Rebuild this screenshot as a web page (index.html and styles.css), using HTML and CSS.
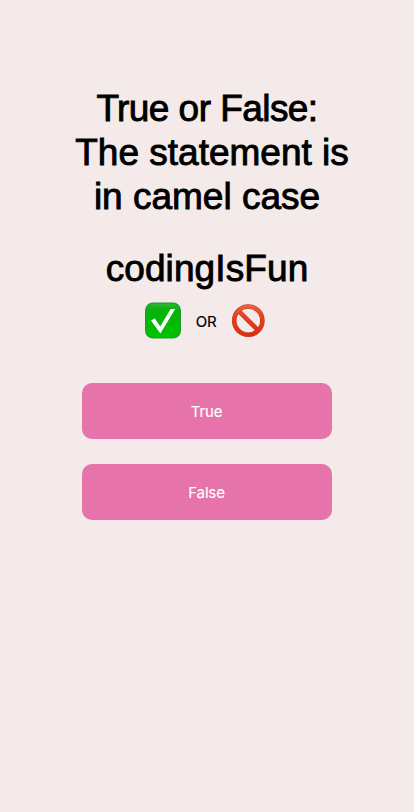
FILE: index.html
```html
<!DOCTYPE html>
<html lang="en">
<head>
<meta charset="utf-8">
<meta name="viewport" content="width=device-width, initial-scale=1">
<title>Camel case quiz</title>
<link rel="stylesheet" href="styles.css">
</head>
<body>
<main class="quiz">
  <h1 class="question"><span class="line l1">True or False:</span><span class="line l2">The statement is</span><span class="line l3">in camel case</span></h1>
  <p class="statement"><span class="line l4">codingIsFun</span></p>
  <div class="choices">
    <svg class="check" viewBox="0 0 36 36" role="img" aria-label="Yes">
      <defs><linearGradient id="green" x1="0" y1="0" x2="0" y2="1"><stop offset="0" stop-color="#32b636"/><stop offset=".2" stop-color="#05b30a"/><stop offset="1" stop-color="#00c400"/></linearGradient></defs>
      <rect x=".6" y=".1" width="34.8" height="34.8" rx="7.5" fill="url(#green)" stroke="#239a35" stroke-width="1.2"/>
      <path d="M6 17.4 9.8 15.6 15.2 23.6 25.6 6H30.2L15.4 30.6Z" fill="#fff"/>
    </svg>
    <span class="or">OR</span>
    <svg class="ban" viewBox="0 0 34 34" role="img" aria-label="No">
      <defs><linearGradient id="red" gradientUnits="userSpaceOnUse" x1="0" y1="0" x2="0" y2="34"><stop offset="0" stop-color="#ef6547"/><stop offset=".35" stop-color="#e8401f"/><stop offset="1" stop-color="#df2a0c"/></linearGradient></defs>
      <g fill="none" stroke="#c23a22" stroke-width="4.6"><circle cx="17.3" cy="16.6" r="14.1"/><path d="M7.3 6.6 27.3 26.6"/></g>
      <g fill="none" stroke="url(#red)" stroke-width="3.5"><circle cx="17.3" cy="16.6" r="14.1"/><path d="M7.3 6.6 27.3 26.6"/></g>
    </svg>
  </div>
  <div class="answers">
    <button class="answer" type="button">True</button>
    <button class="answer" type="button">False</button>
  </div>
</main>
</body>
</html>
```
FILE: styles.css
```css
* { box-sizing: border-box; }
body { margin: 0; background: #f4eae9; font-family: "Liberation Sans", sans-serif; color: #000; }
.quiz { min-height: 812px; padding-top: 87px; display: flex; flex-direction: column; align-items: center; }
.question, .statement { margin: 0; font-size: 37px; line-height: 44px; font-weight: 400; text-align: center; -webkit-text-stroke: .9px #000; white-space: nowrap; }
.line { display: block; }
.l1 { letter-spacing: -.55px; }
.l2 { padding-left: 10px; }
.l4 { letter-spacing: .1px; }
.statement { margin-top: 28px; }
.choices { display: flex; align-items: center; height: 36px; margin: 12px 4px 0 0; }
.check, .ban { overflow: visible; }
.check { width: 36px; height: 36px; }
.or { width: 50px; text-align: center; font: 15px Inter, sans-serif; letter-spacing: -.3px; -webkit-text-stroke: .2px #000; }
.ban { width: 34px; height: 34px; }
.answers { display: flex; flex-direction: column; gap: 25px; margin-top: 44px; }
.answer { width: 250px; height: 56px; border: 0; border-radius: 10px; background: #e673aa; color: #fff; font: 15px Inter, sans-serif; letter-spacing: -.15px; padding: 0 1px 0 0; -webkit-text-stroke: .15px #fff; }
```
